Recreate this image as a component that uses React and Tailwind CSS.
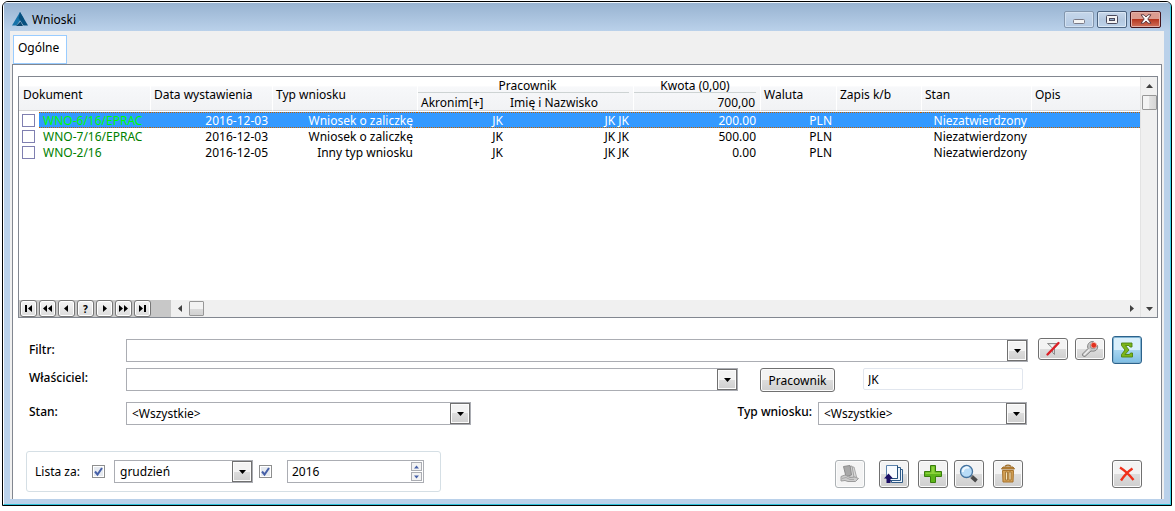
import React from "react";

const rows = [
  { doc: "WNO-6/16/EPRAC", date: "2016-12-03", type: "Wniosek o zaliczkę", acronym: "JK", name: "JK JK", amount: "200.00", currency: "PLN", state: "Niezatwierdzony", selected: true },
  { doc: "WNO-7/16/EPRAC", date: "2016-12-03", type: "Wniosek o zaliczkę", acronym: "JK", name: "JK JK", amount: "500.00", currency: "PLN", state: "Niezatwierdzony" },
  { doc: "WNO-2/16", date: "2016-12-05", type: "Inny typ wniosku", acronym: "JK", name: "JK JK", amount: "0.00", currency: "PLN", state: "Niezatwierdzony" },
];

const buttonFace =
  "flex shrink-0 items-center justify-center rounded-[3px] border border-[#707070] bg-linear-to-b from-[#f3f3f3] from-50% via-[#dddddd] via-50% to-[#cfcfcf] shadow-[inset_0_0_0_1px_#fcfcfc]";

function TitleBar() {
  return (
    <header className="flex h-7 items-center bg-linear-to-b from-[#98b3d1] to-[#bad1ea] pt-1 pr-[9px] pl-2">
      <svg width="16" height="14" viewBox="0 0 16 14" aria-hidden="true">
        <path d="M8 0 12 7 7 5.500z" fill="#0b5c8f" />
        <path d="M8 0 0 13.500 4.500 13.500 8.500 8z" fill="#1672a8" />
        <path d="M8 0 16 13.500 11.500 13.500 6.500 6z" fill="#07507f" />
        <path d="M4 14 8.500 9.500 11 14z" fill="#0d4870" />
      </svg>
      <h1 className="ml-1 flex-1 pt-[2px]">Wnioski</h1>
      <div className="flex gap-[3px]">
        <button aria-label="Minimalizuj" className="flex h-[17px] w-[30px] items-center justify-center rounded-[2px] border border-[#8497ae] bg-linear-to-b from-[#c5d6ea] to-[#b4cae4] shadow-[inset_0_0_0_1px_#d3e1f1]">
          <svg className="mt-1" width="12" height="5" viewBox="0 0 12 5"><rect x=".5" y=".5" width="11" height="4" rx="1" fill="#f4f4f4" stroke="#7a7a86" /></svg>
        </button>
        <button aria-label="Maksymalizuj" className="flex h-[17px] w-[30px] items-center justify-center rounded-[2px] border border-[#4c6480] bg-linear-to-b from-[#c8d8ea] via-[#b4c8df] to-[#bdd3ea] shadow-[inset_0_0_0_1px_#dce8f5]">
          <svg width="12" height="9" viewBox="0 0 12 9"><rect x=".5" y=".5" width="11" height="8" rx="1" fill="#f4f4f4" stroke="#4a4a5c" /><rect x="3.500" y="3.500" width="5" height="2" fill="#8fa9c8" stroke="#4a4a5c" /></svg>
        </button>
        <button aria-label="Zamknij" className="flex h-[17px] w-[31px] items-center justify-center rounded-[2px] border border-[#43141c] bg-linear-to-b from-[#dc9c90] from-50% via-[#b6361f] via-50% to-[#d0705a] shadow-[inset_0_0_0_1px_#e3b0a8]">
          <svg width="12" height="10" viewBox="0 0 12 10"><path d="M1 .8h3l2 2.200 2-2.200h3L7.800 5 11 9.200H8L6 7 4 9.200H1L4.200 5z" fill="#fafafa" stroke="#553038" strokeWidth=".9" /></svg>
        </button>
      </div>
    </header>
  );
}

function Arrow({ dir, className = "" }) {
  const paths = { up: "M0 4 3.500 0 7 4z", down: "M0 0 7 0 3.500 4z", left: "M4 0 4 7 0 3.500z", right: "M0 0 4 3.500 0 7z" };
  const vertical = dir === "up" || dir === "down";
  return (
    <svg className={className} width={vertical ? 7 : 4} height={vertical ? 4 : 7} viewBox={vertical ? "0 0 7 4" : "0 0 4 7"} fill="currentColor" aria-hidden="true">
      <path d={paths[dir]} />
    </svg>
  );
}

function HeadCell({ children, rowSpan, colSpan, className = "" }) {
  return (
    <th rowSpan={rowSpan} colSpan={colSpan} className={"p-0 pt-[2px] pl-[3px] text-left font-normal whitespace-nowrap " + className}>
      {children}
    </th>
  );
}

function ListTable() {
  const tall = "border-b border-l border-b-[#d5d5d5] border-l-white";
  return (
    <table className="w-full table-fixed border-separate border-spacing-0 leading-[14px]">
      <colgroup>
        <col className="w-[20px]" />
        <col className="w-[111px]" />
        <col className="w-[122px]" />
        <col className="w-[145px]" />
        <col className="w-[90px]" />
        <col className="w-[126px]" />
        <col className="w-[127px]" />
        <col className="w-[76px]" />
        <col className="w-[85px]" />
        <col className="w-[110px]" />
        <col />
      </colgroup>
      <thead className="bg-linear-to-b from-white from-25% via-[#f7f8fa] via-30% to-[#f1f2f4]">
        <tr className="h-4">
          <HeadCell rowSpan={2} colSpan={2} className="border-b border-b-[#d5d5d5] !pl-1">Dokument</HeadCell>
          <HeadCell rowSpan={2} className={tall}>Data wystawienia</HeadCell>
          <HeadCell rowSpan={2} className={tall}>Typ wniosku</HeadCell>
          <th colSpan={2} className="border-l border-white p-0 font-normal">
            <div className="mr-1 h-4 border-b border-[#cdd3d3] pt-[2px] pl-2">Pracownik</div>
          </th>
          <th className="border-l border-white p-0 font-normal">
            <div className="mr-1 h-4 border-b border-[#cdd3d3] pt-[2px]">Kwota (0,00)</div>
          </th>
          <HeadCell rowSpan={2} className={tall}>Waluta</HeadCell>
          <HeadCell rowSpan={2} className={tall}>Zapis k/b</HeadCell>
          <HeadCell rowSpan={2} className={tall}>Stan</HeadCell>
          <HeadCell rowSpan={2} className={tall}>Opis</HeadCell>
        </tr>
        <tr className="h-[18px]">
          <HeadCell className={tall}>Akronim[+]</HeadCell>
          <HeadCell className="border-b border-b-[#d5d5d5]">Imię i Nazwisko</HeadCell>
          <th className={"p-0 pt-[2px] pr-[5px] text-right font-normal " + tall}>700,00</th>
        </tr>
      </thead>
      <tbody>
        <tr className="h-px" aria-hidden="true"><td colSpan={11} className="p-0" /></tr>
        {rows.map((r) => {
          const cell = r.selected
            ? "h-4 [background:repeating-linear-gradient(90deg,#c06000_0_1px,#3399ff_1px_2px)_top/100%_1px_no-repeat,repeating-linear-gradient(90deg,#c06000_0_1px,#3399ff_1px_2px)_bottom/100%_1px_no-repeat,#3399ff] p-0 pt-[2px] text-white whitespace-nowrap text-right "
            : "h-4 p-0 pt-[2px] text-right whitespace-nowrap ";
          return (
            <tr key={r.doc}>
              <td className="h-4 p-0 pl-[3px]">
                <input type="checkbox" aria-label={r.doc} className="block size-[13px] appearance-none border border-[#7f7fb0] bg-white" />
              </td>
              <td className={cell + "pl-1 !text-left " + (r.selected ? "!text-[#00ff00]" : "text-[#008000]")}>{r.doc}</td>
              <td className={cell + "pr-1"}>{r.date}</td>
              <td className={cell + "pr-1"}>{r.type}</td>
              <td className={cell + "pr-1"}>{r.acronym}</td>
              <td className={cell + "pr-1"}>{r.name}</td>
              <td className={cell + "pr-1"}>{r.amount}</td>
              <td className={cell + "pr-1"}>{r.currency}</td>
              <td className={cell} />
              <td className={cell + "pr-1"}>{r.state}</td>
              <td className={cell} />
            </tr>
          );
        })}
      </tbody>
    </table>
  );
}

const navigation = [
  ["Pierwszy", <path d="M2 2h2v7H2zM9 2v7L5 5.500z" />],
  ["Poprzednia strona", <path d="M5 2v7L1 5.500zM10 2v7L6 5.500z" />],
  ["Poprzedni", <path d="M7 2v7L3 5.500z" />],
  ["Szukaj", null],
  ["Następny", <path d="M4 2v7l4-3.500z" />],
  ["Następna strona", <path d="M1 2v7l4-3.500zM6 2v7l4-3.500z" />],
  ["Ostatni", <path d="M2 2v7l4-3.500zM7 2h2v7H7z" />],
];

function NavBar() {
  return (
    <div className="flex h-[17px] bg-[#f0f0f0] text-[#404040]">
      <div className="flex w-[152px] shrink-0 gap-[2px] bg-[#c8c8c8] pl-px">
        {navigation.map(([label, glyph]) => (
          <button key={label} aria-label={label} className="flex h-[17px] w-[17px] items-center justify-center rounded-[3px] border border-[#777777] bg-linear-to-b from-[#f4f4f4] to-[#dcdcdc] text-[10px] leading-none font-bold text-black shadow-[inset_0_0_0_1px_#ffffff]">
            {glyph ? <svg width="11" height="11" viewBox="0 0 11 11">{glyph}</svg> : "?"}
          </button>
        ))}
      </div>
      <button aria-label="Przewiń w lewo" className="flex w-[18px] items-center justify-center"><Arrow dir="left" /></button>
      <div className="my-px w-[15px] rounded-[1px] border border-[#979797] bg-linear-to-b from-[#f3f3f3] from-50% via-[#dcdcdc] via-50% to-[#d2d2d2]" />
      <div className="flex-1" />
      <button aria-label="Przewiń w prawo" className="flex w-[17px] items-center justify-center"><Arrow dir="right" /></button>
    </div>
  );
}

function ListPanel() {
  return (
    <section className="mr-[3px] ml-[5px] flex h-[242px] border border-[#828790] bg-white">
      <div className="flex min-w-0 flex-1 flex-col">
        <ListTable />
        <div className="flex-1" />
        <NavBar />
      </div>
      <div className="flex w-[17px] flex-col items-center border-l border-[#e3e3e3] bg-[#f0f0f0] text-[#404040]">
        <button aria-label="Przewiń w górę" className="flex h-[18px] items-center"><Arrow dir="up" /></button>
        <div className="h-[15px] w-[15px] rounded-[1px] border border-[#979797] bg-linear-to-r from-[#f3f3f3] from-50% via-[#e2e2e2] via-50% to-[#d6d6d6]" />
        <div className="flex-1" />
        <button aria-label="Przewiń w dół" className="flex h-[17px] items-center"><Arrow dir="down" /></button>
      </div>
    </section>
  );
}

function Combo({ id, label, value, className }) {
  return (
    <div className={"relative h-[23px] border border-[#abadb3] bg-white " + className}>
      <select id={id} aria-label={label} defaultValue={value} className="h-full w-full appearance-none bg-transparent pr-5 pl-[5px] text-black outline-none">
        <option value={value}>{value}</option>
      </select>
      <span className="pointer-events-none absolute inset-y-0 right-0 flex w-5 items-center justify-center border border-[#707070] bg-linear-to-b from-[#f3f3f3] from-50% via-[#dddddd] via-50% to-[#cfcfcf] shadow-[inset_0_0_0_1px_#fcfcfc]">
        <Arrow dir="down" />
      </span>
    </div>
  );
}

function Tick({ label }) {
  return (
    <span className="relative block size-[13px] shrink-0">
      <input type="checkbox" defaultChecked aria-label={label} className="block size-[13px] appearance-none border border-[#8e8f8f] bg-[#e6eaf0] shadow-[inset_0_0_0_1px_#ffffff]" />
      <svg className="pointer-events-none absolute inset-0" width="13" height="13" viewBox="0 0 13 13"><path d="M3 6.500 5.500 9.500 10 3" fill="none" stroke="#4660a8" strokeWidth="2" /></svg>
    </span>
  );
}

const icons = {
  noFilter: (
    <svg width="16" height="16" viewBox="0 0 16 16">
      <path d="M2.500 2.500h11L9.500 7v6.500l-2-2V7z" fill="#d4d4d4" stroke="#8c8c8c" />
      <path d="M5 3.500h4L7.500 7z" fill="#f4f4f4" />
      <path d="M2.500 13.500 13.500 2" stroke="#dc1f26" strokeWidth="2.400" strokeLinecap="round" />
    </svg>
  ),
  wrench: (
    <svg width="18" height="18" viewBox="0 0 18 18">
      <path d="M1.500 14 7 8.500C5.500 4.500 8.500 1 12.500 1.500L9.500 4.500 10 8l3.500.5 3-3C17.500 9.500 14 12 10 11l-6 5.500c-2 0-3-1-2.500-2.500z" fill="#c4c4c4" stroke="#858585" />
      <path d="M3 15 8.500 9.500" stroke="#f0f0f0" strokeWidth="1.400" />
      <circle cx="12.800" cy="5.200" r="2.800" fill="#e0301e" stroke="#f6b0a5" strokeWidth=".7" />
    </svg>
  ),
  report: (
    <svg width="20" height="20" viewBox="0 0 20 20">
      <path d="M10.500 3.500 14 3l2.500 10-4 2z" fill="#dcdcdc" stroke="#a8a8a8" />
      <path d="M8.500 3 12 2l2 11-4 1.500z" fill="#d4d4d4" stroke="#a0a0a0" />
      <path d="M3.500 2.500 10 1.500 11.500 11 6 12.500z" fill="#a8a8a8" stroke="#8e8e8e" />
      <path d="M1 12.500 5 11l5 2.500 5-.5 3.500 1.500-3 3H8L5 16.500l-4 .5z" fill="#cccccc" stroke="#9c9c9c" />
      <path d="M2 14.500l4-1 4 2h4" fill="none" stroke="#a8a8a8" />
    </svg>
  ),
  pages: (
    <svg width="20" height="20" viewBox="0 0 20 20">
      <path d="M7.500 5.500h11v13h-11z" fill="#eef4fb" stroke="#2f5a86" />
      <path d="M5.500 3.500h11v13h-11z" fill="#eef4fb" stroke="#2f5a86" />
      <path d="M2.500 1.500h11v13h-11z" fill="#f8fbff" stroke="#5b82ac" />
      <path d="M13.500 1.500v13h-11" fill="none" stroke="#24507c" />
      <path d="M4.500 9.500 9 14.500H6.500V19h-4v-4.500H0z" fill="#1b0f66" />
    </svg>
  ),
  plus: (
    <svg width="20" height="20" viewBox="0 0 20 20">
      <path d="M7.500 1.500h5v6h6v5h-6v6h-5v-6h-6v-5h6z" fill="#5db51a" stroke="#397d0c" />
      <path d="M8.500 2.500h3v6h6v1.500h-15V8.500h6z" fill="#8cd23c" />
    </svg>
  ),
  magnifier: (
    <svg width="20" height="20" viewBox="0 0 20 20">
      <path d="m12.500 12.500 5 4.500" stroke="#4a4a4a" strokeWidth="3.800" />
      <path d="m11 11 2 2" stroke="#8a8a8a" strokeWidth="2" />
      <circle cx="7.500" cy="7.500" r="6" fill="#b8dcf7" stroke="#44739f" strokeWidth="1.300" />
      <path d="M4 8a4 4 0 0 1 6-4" fill="none" stroke="#eef8ff" strokeWidth="2" />
    </svg>
  ),
  bin: (
    <svg width="16" height="20" viewBox="0 0 16 20">
      <path d="M5 2.200Q8 .2 11 2.200" fill="none" stroke="#9b6a26" strokeWidth="1.200" />
      <path d="M1.500 5 3 3h10l1.500 2z" fill="#c48a3c" stroke="#9b6a26" />
      <path d="M2.500 6.500h11l-.5 11.500h-10z" fill="#d3a055" stroke="#a8742e" />
      <path d="M5.500 8h2v8h-2zM9 8h2v8H9z" fill="#f6e2b8" stroke="#8f6123" strokeWidth=".7" />
    </svg>
  ),
  cross: (
    <svg width="16" height="16" viewBox="0 0 16 16">
      <path d="M1 1.500C5 4 11 9.500 14.500 14M13.500 2.500C9 5.500 5 10 2 14.500" fill="none" stroke="#f0301a" strokeWidth="2.400" />
    </svg>
  ),
  sigma: (
    <svg width="14" height="16" viewBox="0 0 14 16">
      <path d="M1.500 1h10.500v4h-2L9 3.500H5.500L9 8l-4 4.500h4.500L10.500 11h2v4h-11v-2.500L5 8 1.500 3.500z" fill="#7db51a" stroke="#4d8510" strokeWidth=".9" />
    </svg>
  ),
};

function ToolButton({ icon, label, disabled, className = "" }) {
  return (
    <button aria-label={label} disabled={disabled} className={buttonFace + " h-7 w-[30px] " + (disabled ? "!border-[#adb2b5] !bg-none !bg-[#f4f4f4] " : "") + className}>
      {icons[icon]}
    </button>
  );
}

function Filters() {
  return (
    <form className="pl-4">
      <div className="mt-[18px] flex h-7 items-center pr-[19px]">
        <label htmlFor="filtr" className="w-[97px] font-medium">Filtr:</label>
        <Combo id="filtr" value="" className="mt-px flex-1" />
        <button type="button" aria-label="Wyłącz filtr" className={buttonFace + " mb-[2px] ml-[10px] h-[22px] w-[30px]"}>{icons.noFilter}</button>
        <button type="button" aria-label="Konstruktor filtra" className={buttonFace + " mb-[2px] ml-[7px] h-[22px] w-[30px]"}>{icons.wrench}</button>
        <button type="button" aria-label="Suma" className="ml-[7px] flex h-7 w-[30px] items-center justify-center rounded-[3px] border border-[#2c628b] bg-linear-to-b from-[#d9effb] from-50% via-[#a9d6f0] via-50% to-[#7dbde4] shadow-[inset_0_0_0_1px_#7fb3d3]">{icons.sigma}</button>
      </div>
      <div className="mt-1 flex h-6 items-start pr-[138px]">
        <label htmlFor="wlasciciel" className="w-[97px] leading-5 font-medium">Właściciel:</label>
        <Combo id="wlasciciel" value="" className="flex-1" />
        <button type="button" className={buttonFace + " ml-[22px] h-6 w-[75px] pt-px"}>Pracownik</button>
        <input aria-label="Pracownik" defaultValue="JK" className="ml-7 h-[22px] w-[160px] rounded-[2px] border border-[#e1e6ee] px-1 outline-none" />
      </div>
      <div className="mt-[10px] flex h-6 items-start pr-[134px]">
        <label htmlFor="stan" className="w-[97px] leading-5 font-medium">Stan:</label>
        <Combo id="stan" value="<Wszystkie>" className="w-[345px]" />
        <label htmlFor="typ" className="mr-[6px] ml-auto leading-5 font-medium">Typ wniosku:</label>
        <Combo id="typ" value="<Wszystkie>" className="w-[209px]" />
      </div>
    </form>
  );
}

function Footer() {
  return (
    <footer className="mt-[25px] flex items-center pr-[19px] pb-[7px] pl-[13px]">
      <fieldset className="flex h-[41px] w-[415px] items-center rounded-[3px] border border-[#d5dfe5] pl-2" aria-label="Lista za">
        <span className="w-[57px]">Lista za:</span>
        <Tick label="Miesiąc" />
        <Combo label="Miesiąc" value="grudzień" className="mr-[6px] ml-[9px] w-[139px]" />
        <Tick label="Rok" />
        <div className="ml-[15px] flex h-[23px] w-[137px] items-center border border-[#abadb3] bg-white pr-px">
          <input aria-label="Rok" defaultValue="2016" inputMode="numeric" className="h-full min-w-0 flex-1 pl-1 outline-none" />
          <div className="flex flex-col gap-px text-[#4660a8]">
            <button aria-label="Zwiększ" className="flex h-[9px] w-[11px] items-center justify-center border border-[#abadb3] bg-[#f3f3f3]"><Arrow dir="up" className="w-[5px]" /></button>
            <button aria-label="Zmniejsz" className="flex h-[9px] w-[11px] items-center justify-center border border-[#abadb3] bg-[#f3f3f3]"><Arrow dir="down" className="w-[5px]" /></button>
          </div>
        </div>
      </fieldset>
      <div className="ml-auto flex pt-1">
        <ToolButton icon="report" label="Wydruk" disabled />
        <ToolButton icon="pages" label="Przenieś" className="ml-[14px]" />
        <ToolButton icon="plus" label="Dodaj" className="ml-[9px]" />
        <ToolButton icon="magnifier" label="Zmień" className="ml-[6px]" />
        <ToolButton icon="bin" label="Usuń" className="ml-[9px]" />
        <ToolButton icon="cross" label="Zamknij" className="ml-[89px]" />
      </div>
    </footer>
  );
}

export default function App() {
  return (
    <div className="bg-white pt-px pr-[3px] pb-[5px] pl-[2px] font-['Noto_Sans',sans-serif] text-[12px] leading-4 text-black">
      <div className="overflow-hidden rounded-t-[6px] border border-black bg-[#bad1ea]">
        <div className="border border-t-[#f0f6fc] border-r-[#3fd4e8] border-b-[#2fc0d8] border-l-white">
          <TitleBar />
          <main className="mx-[6px] mb-[5px] bg-[#f0f0f0] pt-1 pl-[2px]">
            <nav className="pl-px">
              <button className="block h-[29px] w-[54px] border border-[#99ccff] bg-white pb-1 pl-1 text-left">Ogólne</button>
            </nav>
            <div className="mr-[2px] border border-b-0 border-[#828790] bg-white pt-[11px]">
              <ListPanel />
              <Filters />
              <Footer />
            </div>
          </main>
        </div>
      </div>
    </div>
  );
}
